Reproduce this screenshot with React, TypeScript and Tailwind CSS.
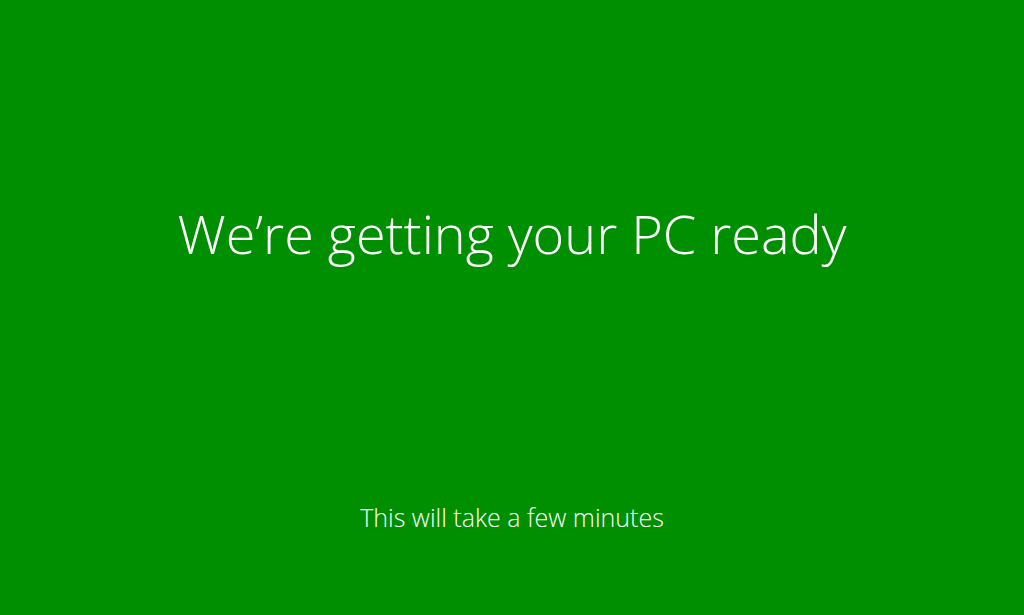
import * as React from "react";

export default function App() {
  return (
    <div
      className="flex h-[615px] w-[1024px] flex-col items-center bg-[#008f00] text-white"
      style={{ fontFamily: '"Open Sans", "Liberation Sans", sans-serif' }}
    >
      <h1 className="mt-[201px] text-[54px] font-light leading-[64px]">
        We’re getting your PC ready
      </h1>
      <p className="mt-[238px] text-[25px] font-light leading-[28px]">
        This will take a few minutes
      </p>
    </div>
  );
}
